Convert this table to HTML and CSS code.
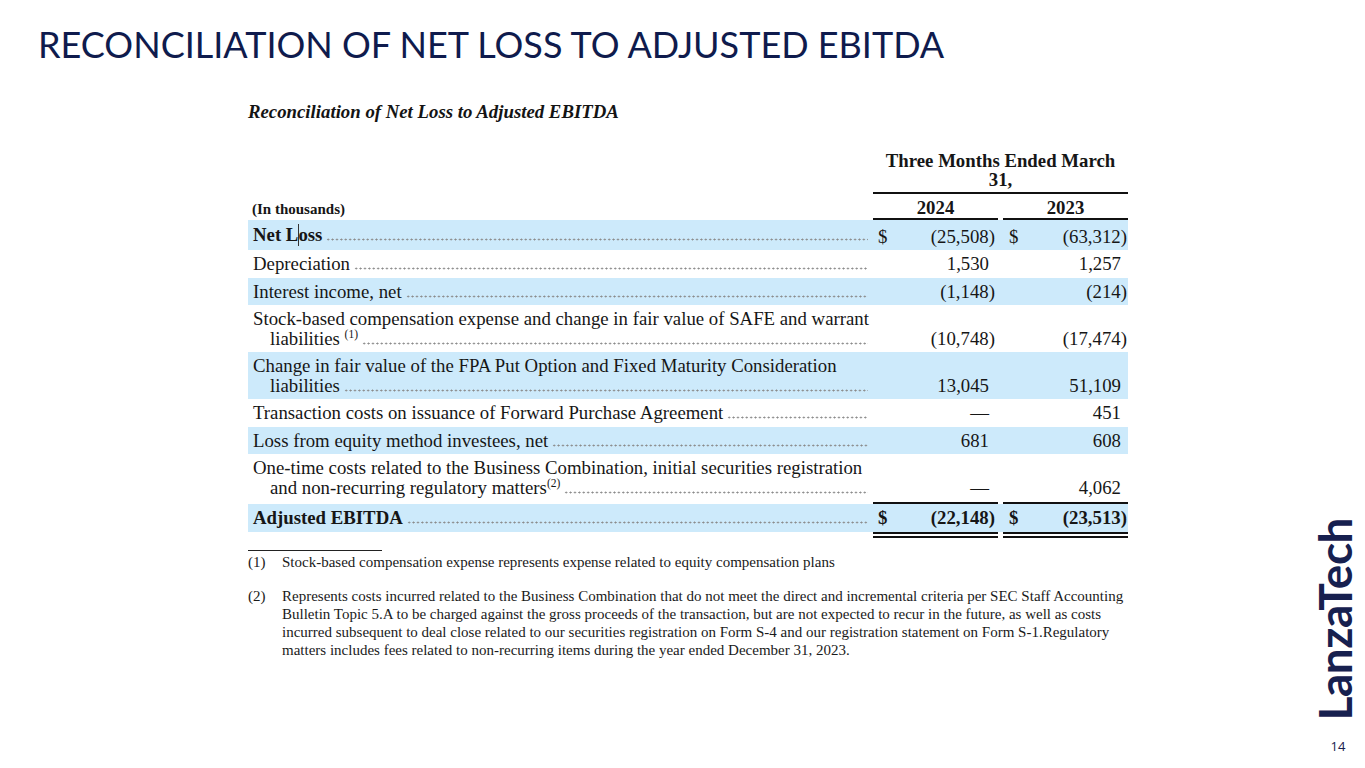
FILE: index.html
```html
<!DOCTYPE html>
<html lang="en">
<head>
<meta charset="utf-8">
<title>Reconciliation of Net Loss to Adjusted EBITDA</title>
<link rel="stylesheet" href="styles.css">
</head>
<body>
<div class="slide">
  <main class="main">
    <h1 class="title">RECONCILIATION OF NET LOSS TO ADJUSTED EBITDA</h1>
    <section class="doc">
      <h2 class="doc-title">Reconciliation of Net Loss to Adjusted EBITDA</h2>
      <div class="tbl">
        <div class="hrow hrow1">
          <div></div>
          <div class="period">Three Months Ended March<br>31,</div>
        </div>
        <div class="hrow hrow2">
          <div class="units">(In thousands)</div>
          <div class="yr">2024</div>
          <div class="yr">2023</div>
        </div>

        <div class="row alt">
          <div class="lbl"><div class="lead"><span class="b">Net L<span class="caret"></span>oss</span><i class="dots"></i></div></div>
          <div class="num"><span>$</span><span>(25,508)</span></div>
          <div class="num c2"><span>$</span><span>(63,312)</span></div>
        </div>
        <div class="row">
          <div class="lbl"><div class="lead"><span>Depreciation</span><i class="dots"></i></div></div>
          <div class="num"><span></span><span class="np">1,530</span></div>
          <div class="num c2"><span></span><span class="np">1,257</span></div>
        </div>
        <div class="row alt">
          <div class="lbl"><div class="lead"><span>Interest income, net</span><i class="dots"></i></div></div>
          <div class="num"><span></span><span>(1,148)</span></div>
          <div class="num c2"><span></span><span>(214)</span></div>
        </div>
        <div class="row">
          <div class="lbl">
            <div class="l1">Stock-based compensation expense and change in fair value of SAFE and warrant</div>
            <div class="lead ind"><span>liabilities <sup>(1)</sup></span><i class="dots"></i></div>
          </div>
          <div class="num"><span></span><span>(10,748)</span></div>
          <div class="num c2"><span></span><span>(17,474)</span></div>
        </div>
        <div class="row alt">
          <div class="lbl">
            <div class="l1">Change in fair value of the FPA Put Option and Fixed Maturity Consideration</div>
            <div class="lead ind"><span>liabilities</span><i class="dots"></i></div>
          </div>
          <div class="num"><span></span><span class="np">13,045</span></div>
          <div class="num c2"><span></span><span class="np">51,109</span></div>
        </div>
        <div class="row">
          <div class="lbl"><div class="lead"><span>Transaction costs on issuance of Forward Purchase Agreement</span><i class="dots"></i></div></div>
          <div class="num"><span></span><span class="np">—</span></div>
          <div class="num c2"><span></span><span class="np">451</span></div>
        </div>
        <div class="row alt">
          <div class="lbl"><div class="lead"><span>Loss from equity method investees, net</span><i class="dots"></i></div></div>
          <div class="num"><span></span><span class="np">681</span></div>
          <div class="num c2"><span></span><span class="np">608</span></div>
        </div>
        <div class="row">
          <div class="lbl">
            <div class="l1">One-time costs related to the Business Combination, initial securities registration</div>
            <div class="lead ind"><span>and non-recurring regulatory matters<sup>(2)</sup></span><i class="dots"></i></div>
          </div>
          <div class="num"><span></span><span class="np">—</span></div>
          <div class="num c2"><span></span><span class="np">4,062</span></div>
        </div>
        <div class="rule single"><div></div><div class="ln"></div><div class="ln"></div></div>
        <div class="row alt total">
          <div class="lbl"><div class="lead"><span>Adjusted EBITDA</span><i class="dots"></i></div></div>
          <div class="num"><span>$</span><span>(22,148)</span></div>
          <div class="num c2"><span>$</span><span>(23,513)</span></div>
        </div>
        <div class="rule double"><div></div><div class="ln"></div><div class="ln"></div></div>
      </div>

      <div class="notes">
        <div class="note-rule"></div>
        <div class="note">
          <span class="mark">(1)</span>
          <p>Stock-based compensation expense represents expense related to equity compensation plans</p>
        </div>
        <div class="note">
          <span class="mark">(2)</span>
          <p>Represents costs incurred related to the Business Combination that do not meet the direct and incremental criteria per SEC Staff Accounting<br>Bulletin Topic 5.A to be charged against the gross proceeds of the transaction, but are not expected to recur in the future, as well as costs<br>incurred subsequent to deal close related to our securities registration on Form S-4 and our registration statement on Form S-1.Regulatory<br>matters includes fees related to non-recurring items during the year ended December 31, 2023.</p>
        </div>
      </div>
    </section>
  </main>
  <aside class="side">
    <div class="logo">LanzaTech</div>
    <div class="pg">14</div>
  </aside>
</div>
</body>
</html>
```

FILE: styles.css
```css
html, body {
  margin: 0;
  padding: 0;
  background: #ffffff;
}

.slide {
  width: 1365px;
  height: 768px;
  display: flex;
  overflow: hidden;
  background: #ffffff;
}

.main {
  flex: 1;
  padding: 24px 0 0 38px;
}

.title {
  margin: 0;
  font-family: Lato, "Open Sans", sans-serif;
  font-weight: 400;
  font-size: 36px;
  line-height: 40px;
  color: #0f1b4d;
  white-space: nowrap;
}

.doc {
  margin: 38px 0 0 210px;
  width: 880px;
  font-family: "Liberation Serif", "Times New Roman", serif;
  color: #161616;
}

.doc-title {
  margin: 0 0 29px;
  font-size: 18.8px;
  line-height: 20px;
  font-weight: 700;
  font-style: italic;
  color: #141414;
}

.tbl {
  font-size: 18.8px;
}

.hrow,
.row,
.rule {
  display: grid;
  grid-template-columns: 620px 125px 125px;
  column-gap: 5px;
}

.hrow {
  font-weight: 700;
  line-height: 18px;
  align-items: end;
}

.hrow1 {
  grid-template-columns: 625px 255px;
  column-gap: 0;
}

.period {
  text-align: center;
  line-height: 19px;
  padding-bottom: 3px;
  border-bottom: 2px solid #111;
}

.hrow2 {
  padding-top: 5px;
}

.yr {
  text-align: center;
  padding-bottom: 1px;
  border-bottom: 2px solid #111;
}

.units {
  font-size: 15px;
  padding-left: 4px;
  padding-bottom: 2px;
}

.row {
  padding: 4px 0;
  line-height: 19.5px;
  align-items: end;
}

.row.alt {
  background: #cdeafb;
}

.b,
.row.total {
  font-weight: 700;
}

.lbl {
  padding-left: 5px;
  min-width: 0;
}

.l1 {
  white-space: nowrap;
}

.lead {
  display: flex;
  align-items: baseline;
}

.lead > span {
  white-space: nowrap;
}

.ind {
  padding-left: 17px;
}

.dots {
  flex: 1;
  height: 4px;
  margin-left: 4px;
  background-image: radial-gradient(circle, #8a8a8a 0.8px, transparent 1.2px);
  background-size: 4.4px 3px;
  background-repeat: repeat-x;
  background-position: 0 100%;
}

sup {
  font-size: 11.5px;
  line-height: 0;
  vertical-align: 7px;
}

.caret {
  display: inline-block;
  width: 1px;
  height: 22px;
  background: #333;
  vertical-align: -5px;
  margin: 0 -0.5px;
}

.num {
  display: flex;
  justify-content: space-between;
  padding: 0 3px 0 5px;
  white-space: nowrap;
}

.num.c2 {
  padding: 0 1px 0 6px;
}

.np {
  padding-right: 6px;
}

.rule .ln {
  border-top: 2px solid #111;
}

.rule.single {
  height: 2px;
  margin-top: 1px;
}

.rule.double .ln {
  border-top: 6px double #111;
}

.notes {
  margin-top: 12px;
  font-size: 15px;
  line-height: 18px;
  color: #1a1a1a;
}

.note-rule {
  width: 134px;
  border-top: 1px solid #222;
}

.note {
  display: grid;
  grid-template-columns: 34px 1fr;
  margin-top: 2px;
}

.note + .note {
  margin-top: 16px;
}

.note p {
  margin: 0;
  white-space: nowrap;
}

.side {
  width: 50px;
  padding-right: 5px;
  display: flex;
  flex-direction: column;
  justify-content: flex-end;
  align-items: center;
  padding-bottom: 14px;
}

.logo {
  writing-mode: vertical-rl;
  transform: rotate(180deg);
  font-family: Lato, "Open Sans", sans-serif;
  font-weight: 700;
  font-size: 46px;
  line-height: 1;
  color: #17204f;
  letter-spacing: -0.5px;
}

.pg {
  margin-top: 18px;
  margin-left: 6px;
  font-family: "Open Sans", sans-serif;
  font-size: 13px;
  line-height: 16px;
  color: #17204f;
}
```
